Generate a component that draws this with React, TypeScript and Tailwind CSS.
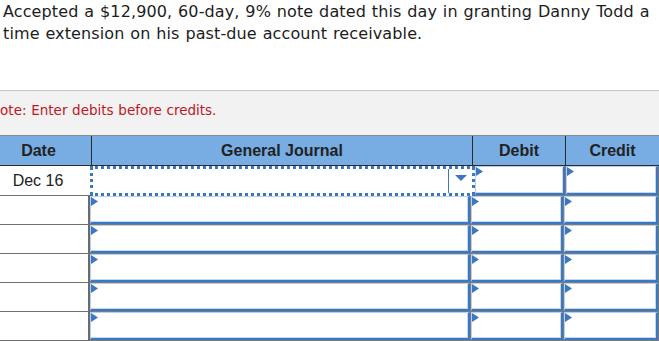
import React from "react";

function EntryCell({className}: {className: string}) {
    return (
        <div className={`${className} h-full border-r border-b border-[#7b7b7b]`}>
            <div
                className="relative h-full bg-white border-t border-l border-t-[#b7d0ee] border-l-[#b7d0ee] border-b-2 border-r-2 border-b-[#3b77c2] border-r-[#3b77c2] shadow-[inset_-1px_-1px_0_0_#c3d8f1]">
                <svg className="absolute left-0 top-0" width="7" height="9" viewBox="0 0 7 9">
                    <polygon points="0,0 7,4.5 0,9" fill="#3b77c2"/>
                </svg>
            </div>
        </div>
    )
}

function EmptyRow() {
    return (
        <div className="flex h-[29px]">
            <div className="w-[104px] h-full border-b border-[#707070] border-r-2 border-r-[#6b6b6b]"/>
            <EntryCell className="w-[381px]"/>
            <EntryCell className="w-[93px]"/>
            <EntryCell className="w-[95px]"/>
        </div>
    )
}

export default function App() {
    return (
        <div className="w-[659px] h-[341px] overflow-hidden bg-white">
            <p className="h-[90px] pl-[3px] pt-[1px] text-[16px] leading-[22px] tracking-[0.12px] [word-spacing:0.6px] text-[#1c1c1c] font-['DejaVu_Sans',sans-serif]">
                Accepted a $12,900, 60-day, 9% note dated this day in granting Danny Todd a time extension on his
                past-due account receivable.
            </p>

            <div className="-ml-[14px] w-[673px]">
                {/* note strip */}
                <div className="h-[45px] border-t border-[#c6c6c6] bg-[#f2f2f2] pl-[4px] pt-[6px]">
                    <span className="text-[13.5px] leading-[18px] [word-spacing:0.4px] text-[#c0161e] font-['DejaVu_Sans',sans-serif]">
                        Note: Enter debits before credits.
                    </span>
                </div>

                {/* header */}
                <div
                    className="flex h-[31px] border-t border-[#8a8a8a] border-b border-b-[#2a2a2a] bg-[#77ade3] font-['Liberation_Sans',Arial,sans-serif] text-[16px] font-bold text-[#222]">
                    <div className="w-[106px] flex items-center justify-center border-r border-[#2a2a2a]">Date</div>
                    <div className="w-[381px] flex items-center justify-center border-r border-[#2a2a2a]">General
                        Journal
                    </div>
                    <div className="w-[93px] flex items-center justify-center border-r border-[#2a2a2a]">Debit</div>
                    <div className="w-[93px] flex items-center justify-center">Credit</div>
                </div>

                {/* first row, focused account select */}
                <div className="flex h-[30px]">
                    <div
                        className="w-[104px] h-full border-b border-[#707070] flex items-center justify-center text-[16px] text-[#222] font-['Liberation_Sans',Arial,sans-serif]">
                        Dec 16
                    </div>
                    <div
                        className="relative w-[385px] h-full bg-white border-[3px] border-dotted border-[#3b77c2] flex justify-end">
                        <div className="w-[24px] h-full border-l border-[#3b77c2] flex items-start justify-center pt-[6px]">
                            <svg width="12" height="6" viewBox="0 0 12 6">
                                <polygon points="0,0 12,0 6,6" fill="#3b77c2"/>
                            </svg>
                        </div>
                    </div>
                    <EntryCell className="w-[91px]"/>
                    <EntryCell className="w-[93px]"/>
                </div>

                <EmptyRow/>
                <EmptyRow/>
                <EmptyRow/>
                <EmptyRow/>
                <EmptyRow/>
            </div>
        </div>
    )
}
